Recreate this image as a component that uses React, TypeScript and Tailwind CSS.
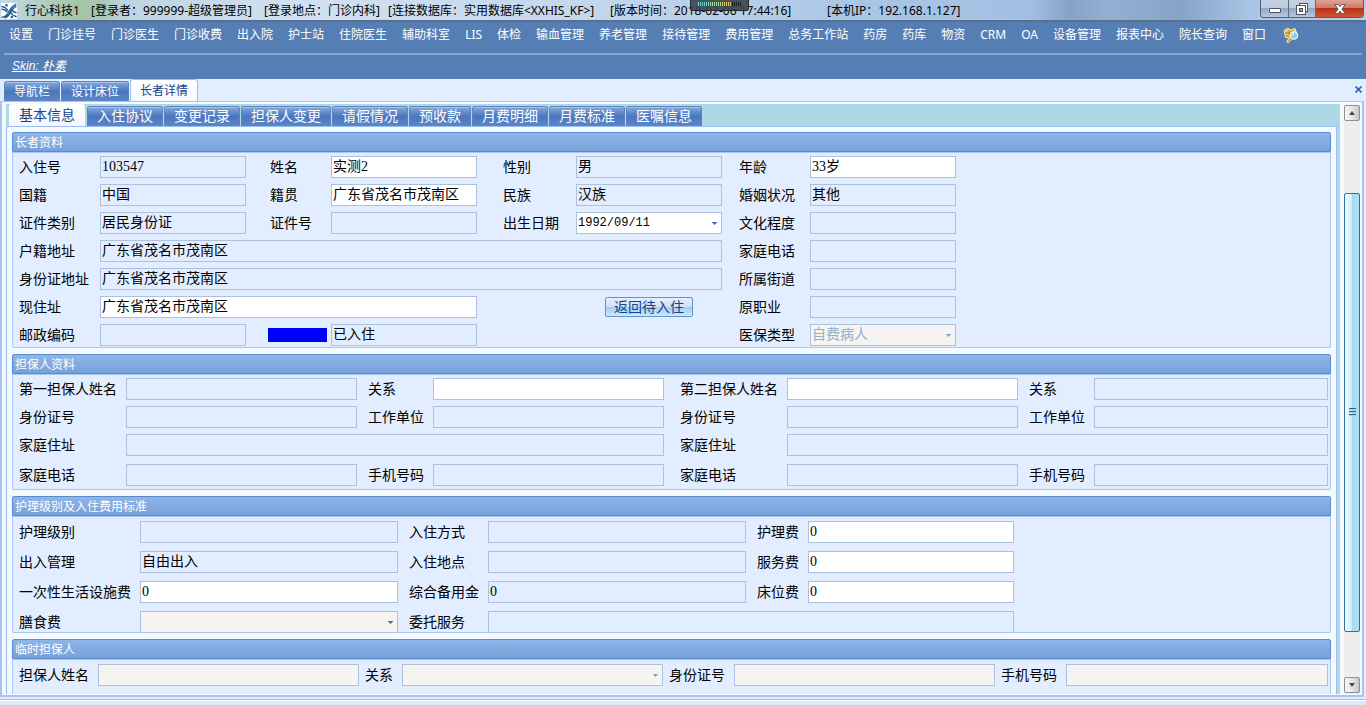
import { useId, type ReactNode } from 'react';

const menuItems = [
  '设置', '门诊挂号', '门诊医生', '门诊收费', '出入院', '护士站', '住院医生', '辅助科室', 'LIS', '体检',
  '输血管理', '养老管理', '接待管理', '费用管理', '总务工作站', '药房', '药库', '物资', 'CRM', 'OA',
  '设备管理', '报表中心', '院长查询', '窗口',
];

const sectionTabs = ['入住协议', '变更记录', '担保人变更', '请假情况', '预收款', '月费明细', '月费标准', '医嘱信息'];

const ui = "font-['Noto_Sans','Noto_Sans_CJK_SC',sans-serif]";
const song = "font-['Liberation_Serif','Noto_Sans_CJK_SC',serif]";
const idleTab =
  'border border-b-0 border-[#5c83bd] rounded-t-[3px] bg-linear-to-b from-[#86a9dc] via-[#4a76bd] to-[#5b87ca] text-white shadow-[inset_0_1px_0_#a5c3ec]';

type Tone = 'locked' | 'open' | 'off';
const tones: Record<Tone, string> = {
  locked: 'bg-[#e2eeff]',
  open: 'bg-white',
  off: 'bg-[#f5f4f1]',
};

function Arrow({ dim }: { dim?: boolean }) {
  return (
    <svg
      viewBox="0 0 5 3"
      className={`pointer-events-none absolute right-[5px] top-[10px] h-[3px] w-[5px] ${dim ? 'text-[#8aa9c9]' : 'text-[#3f74b5]'}`}
      shapeRendering="crispEdges"
      aria-hidden="true"
    >
      <path d="M0 0h5v1H4v1H3v1H2V2H1V1H0z" fill="currentColor" />
    </svg>
  );
}

interface FieldProps {
  label: string;
  value?: string;
  tone?: Tone;
  pad?: string;
  span?: string;
  mono?: boolean;
  drop?: 'select' | 'date';
  dim?: boolean;
}

function Field({ label, value = '', tone = 'locked', pad = '', span = '', mono, drop, dim }: FieldProps) {
  const id = useId();
  const latinOnly = /^[\d/]*$/.test(value);
  const box = `block h-[22px] w-full min-w-0 appearance-none rounded-none border border-[#abc1de] pl-px pr-0 leading-[18px] outline-none ${
    mono ? "font-['Liberation_Mono',monospace] text-xs" : 'text-sm'
  } ${latinOnly || drop ? 'pb-0' : 'pb-1'} ${tones[tone]} ${dim ? 'text-[#93aecb]' : 'text-black'}`;
  return (
    <>
      <label htmlFor={id} className={`h-[22px] whitespace-nowrap text-sm leading-6 text-black ${pad}`}>
        {label}
      </label>
      <div className={`relative ${span}`}>
        {drop === 'select' ? (
          <select id={id} disabled className={`${box} opacity-100`} defaultValue={value}>
            <option value={value}>{value}</option>
          </select>
        ) : (
          <input id={id} type="text" defaultValue={value} readOnly={tone === 'locked'} disabled={tone === 'off'} className={box} />
        )}
        {drop && <Arrow dim={dim} />}
      </div>
    </>
  );
}

function Group({ title, body, children }: { title: string; body: string; children: ReactNode }) {
  return (
    <section>
      <h2 className="h-5 rounded-t-[2px] border border-[#5b8bcb] bg-linear-to-b from-[#8fb5e8] to-[#76a1da] pl-[2px] text-xs leading-[20px] text-white">
        {title}
      </h2>
      <div className={`grid content-start rounded-b-[2px] bg-[#e2eeff] pl-[7px] pr-[3px] shadow-[inset_0_0_0_1px_#a9c8f1] ${body}`}>{children}</div>
    </section>
  );
}

function Logo() {
  return (
    <svg viewBox="0 0 16 16" className="h-4 w-4 shrink-0" aria-hidden="true">
      <rect width="16" height="16" fill="#fff" />
      <path
        d="M1 3.500c2 .3 4 1.300 5.600 3.600M1 6.300c2 .1 3.500 .9 4.800 2.500M1 14.200c2.800-.3 5-1.800 6.500-4.700C9 6.300 11 3.200 14.800 1.300M4 14.800c2.800-1 4.500-3 5.800-5.800 1.200-2.400 2.700-4.400 5-5.600M9.300 9c1.500 2.600 3.200 4 5.700 4.500M10.500 6.900c1.500 1.600 2.800 2.300 4.500 2.500"
        fill="none"
        stroke="#1c5d9b"
        strokeWidth="1.500"
        strokeLinecap="round"
      />
      <circle cx="5.500" cy="2.200" r="1.200" fill="#1c5d9b" />
      <circle cx="10.800" cy="14" r="1.200" fill="#1c5d9b" />
    </svg>
  );
}

function TitleBar() {
  return (
    <header
      className={`relative flex h-[22px] items-center whitespace-pre border-b-2 border-b-[#5b6e8c] bg-[linear-gradient(90deg,#c3d8e8_0,#b4cfc4_40px,#a3c4a6_80px,#a9c8b0_100px,#bdd4e2_125px,#d2e1f1_300px,#c8daee_500px,#bfd4ec_640px,#aac6e6_860px,#a3c0e2_1030px,#86a3c5_1070px,#94b1d3_1110px,#86a4c8_1180px,#a9c5e5_1250px,#b8d0ea_100%)] pl-px text-xs text-black ${ui}`}
    >
      <div className="flex flex-1 items-center pt-[2px]">
        <Logo />
        <h1 className="ml-2 w-[66px]">行心科技1</h1>
        <span className="w-[173px]">[登录者：999999-超级管理员]</span>
        <span className="w-[124px]">[登录地点：门诊内科]</span>
        <span className="w-[222px]">[连接数据库：实用数据库&lt;XXHIS_KF&gt;]</span>
        <span className="w-[217px]">[版本时间：2018-02-06 17:44:16]</span>
        <span>[本机IP：192.168.1.127]</span>
      </div>
      <div className="absolute left-[690px] top-0 flex h-[11px] w-[59px] items-start justify-center gap-px rounded-b-[3px] border border-t-0 border-[#23262d] bg-[#3d424d]/90 pt-[2px]">
        {Array.from({ length: 22 }, (_, i) => (
          <i key={i} className={`h-1 w-px ${i < 6 ? 'bg-[#63d5c8]' : i < 12 ? 'bg-[#a4dc9a]' : i < 17 ? 'bg-[#e3c95f]' : 'bg-[#1d2026]'}`} />
        ))}
      </div>
      <div className="mr-[2px] flex h-[18px] self-start overflow-hidden rounded-b-[4px] border border-t-0 border-[#4f5f74]">
        <button type="button" aria-label="最小化" className="flex w-[28px] items-center justify-center border-r border-[#5c6c82] bg-[linear-gradient(#c4d3e4_0,#bccbdd_50%,#93a9c3_50%,#b4c8de_100%)]">
          <svg viewBox="0 0 12 6" className="mt-1 h-[6px] w-3" aria-hidden="true">
            <rect x=".5" y=".5" width="11" height="4" rx=".5" fill="#fff" stroke="#4b5361" />
          </svg>
        </button>
        <button type="button" aria-label="还原" className="flex w-[27px] items-center justify-center border-r border-[#5c6c82] bg-[linear-gradient(#c4d3e4_0,#bccbdd_50%,#93a9c3_50%,#b4c8de_100%)]">
          <svg viewBox="0 0 12 12" className="h-3 w-3" aria-hidden="true">
            <rect x="3.500" y=".5" width="8" height="8" fill="#fff" stroke="#4b5361" />
            <rect x=".5" y="2.500" width="9" height="9" fill="#fff" stroke="#4b5361" />
            <rect x="3.500" y="5.500" width="3" height="3" fill="#8ea4bd" stroke="#4b5361" />
          </svg>
        </button>
        <button type="button" aria-label="关闭" className="flex w-[47px] items-center justify-center bg-[linear-gradient(#dda294_0,#cf7562_48%,#b53219_50%,#d0562f_100%)]">
          <svg viewBox="0 0 12 10" className="h-[10px] w-3" aria-hidden="true">
            <path d="M.8.6h3.400L6 2.700 7.800.6h3.400L7.900 5l3.300 4.400H7.800L6 7.300 4.200 9.400H.8L4.100 5z" fill="#fff" stroke="#4b5361" strokeWidth=".9" />
          </svg>
        </button>
      </div>
    </header>
  );
}

function MenuBar() {
  return (
    <div className="bg-[#557eb4] px-1 text-white">
      <nav className={`flex h-[33px] items-center gap-[15px] overflow-hidden whitespace-nowrap border-b-2 border-[#86a5d2] pb-[5px] pl-[5px] text-xs ${ui}`}>
        {menuItems.map((m) => (
          <a key={m} href="#">
            {m}
          </a>
        ))}
        <a href="#" aria-label="查询工具" className="ml-[2px]">
          <svg viewBox="0 0 16 16" className="h-4 w-4" aria-hidden="true">
            <path d="M1 3.500 5 1l2.500 2L12 1.500l1.500 4L12 10l-5 1.500-4.500-1.200z" fill="#f1cb4e" stroke="#fff3c0" strokeWidth=".8" />
            <path d="M2 6h4M6 3.500l1 5M9.500 3.500 8 6.500M3 8.500l3 1" stroke="#a87412" strokeWidth="1" fill="none" />
            <circle cx="11" cy="8.500" r="3.600" fill="#7fd0ea" stroke="#eef9ff" strokeWidth="1.200" />
            <path d="M9.200 8.500a1.800 1.800 0 0 1 1.800-1.800" stroke="#fff" fill="none" />
            <path d="M7.800 11.500 5 14.300" stroke="#fff3c0" strokeWidth="3" strokeLinecap="round" />
            <path d="M7.800 11.500 5.200 14.100" stroke="#e2a91e" strokeWidth="1.800" strokeLinecap="round" />
          </svg>
        </a>
      </nav>
      <div className="h-6 pl-2 text-xs leading-[22px]">
        <a href="#" className="font-['Liberation_Sans','Noto_Sans_CJK_SC',sans-serif] italic underline">
          Skin: 朴素
        </a>
      </div>
    </div>
  );
}

function ScrollBar() {
  const end = 'flex h-4 w-4 shrink-0 items-center justify-center rounded-[2px] border border-[#8f8f8f] bg-linear-to-r from-[#f7f7f7] via-[#e6e6e6] to-[#c6c6c8]';
  return (
    <div className="ml-1 mr-[2px] mt-px flex w-4 shrink-0 flex-col bg-[#eeeeee] pb-px">
      <button type="button" aria-label="向上滚动" className={end}>
        <svg viewBox="0 0 6 4" className="h-1 w-[6px]" aria-hidden="true">
          <path d="M3 0l3 4H0z" fill="#4a4a4a" />
        </svg>
      </button>
      <div className="grow-[73]" />
      <div className="flex grow-[437] flex-col items-center justify-center gap-px rounded-[2px] border border-[#2f7199] bg-[linear-gradient(90deg,#f0faff_0,#d8f1fc_45%,#a5daf3_50%,#b4e1f6_100%)]">
        <i className="h-[2px] w-[7px] border-b border-[#9fd0e6] bg-[#2a6a8c]" />
        <i className="h-[2px] w-[7px] border-b border-[#9fd0e6] bg-[#2a6a8c]" />
        <i className="h-[2px] w-[7px] border-b border-[#9fd0e6] bg-[#2a6a8c]" />
      </div>
      <div className="grow-[46]" />
      <button type="button" aria-label="向下滚动" className={end}>
        <svg viewBox="0 0 6 4" className="h-1 w-[6px]" aria-hidden="true">
          <path d="M3 4l3-4H0z" fill="#4a4a4a" />
        </svg>
      </button>
    </div>
  );
}

function Forms() {
  return (
    <form className="flex flex-col gap-[6px]" onSubmit={(e) => e.preventDefault()}>
      <Group title="长者资料" body="grid-cols-[81px_146px_85px_146px_99px_146px_88px_146px] gap-y-[6px] pt-1 pb-[2px]">
        <Field label="入住号" value="103547" />
        <Field label="姓名" value="实测2" tone="open" pad="pl-6" />
        <Field label="性别" value="男" pad="pl-[26px]" />
        <Field label="年龄" value="33岁" tone="open" pad="pl-[17px]" />

        <Field label="国籍" value="中国" />
        <Field label="籍贯" value="广东省茂名市茂南区" tone="open" pad="pl-6" />
        <Field label="民族" value="汉族" pad="pl-[26px]" />
        <Field label="婚姻状况" value="其他" pad="pl-[17px]" />

        <Field label="证件类别" value="居民身份证" />
        <Field label="证件号" pad="pl-6" />
        <Field label="出生日期" value="1992/09/11" tone="open" pad="pl-[26px]" drop="date" mono />
        <Field label="文化程度" pad="pl-[17px]" />

        <Field label="户籍地址" value="广东省茂名市茂南区" span="col-span-5" />
        <Field label="家庭电话" pad="pl-[17px]" />

        <Field label="身份证地址" value="广东省茂名市茂南区" span="col-span-5" />
        <Field label="所属街道" pad="pl-[17px]" />

        <Field label="现住址" value="广东省茂名市茂南区" tone="open" span="col-span-3" />
        <div className="col-span-2 flex items-center justify-end pr-[29px]">
          <button
            type="button"
            className="h-5 rounded-[2px] border border-[#5f93d6] bg-[linear-gradient(#e4effc_0,#cfe2f6_48%,#a3cdf3_52%,#c8ecfb_100%)] px-2 text-sm leading-[20px] text-[#15428b]"
          >
            返回待入住
          </button>
        </div>
        <Field label="原职业" pad="pl-[17px]" />

        <Field label="邮政编码" />
        <span className="ml-[22px] mr-1 h-[14px] self-center bg-[#0000ff]" />
        <input aria-label="入住状态" defaultValue="已入住" readOnly className="h-[22px] w-full border border-[#abc1de] bg-[#e2eeff] pb-1 pl-px text-sm leading-[18px] outline-none" />
        <span className="col-span-2" />
        <Field label="医保类型" value="自费病人" tone="off" pad="pl-[17px]" drop="select" dim />
      </Group>

      <Group title="担保人资料" body="grid-cols-[107px_231fr_76px_231fr_123px_231fr_76px_234fr] gap-y-[6px] pt-1 pb-1">
        <Field label="第一担保人姓名" />
        <Field label="关系" tone="open" pad="pl-[11px]" />
        <Field label="第二担保人姓名" tone="open" pad="pl-4" />
        <Field label="关系" pad="pl-[11px]" />

        <Field label="身份证号" />
        <Field label="工作单位" pad="pl-[11px]" />
        <Field label="身份证号" pad="pl-4" />
        <Field label="工作单位" pad="pl-[11px]" />

        <Field label="家庭住址" span="col-span-3" />
        <Field label="家庭住址" pad="pl-4" span="col-span-3" />

        <div className="col-span-8 mt-[2px] grid grid-cols-subgrid">
          <Field label="家庭电话" />
          <Field label="手机号码" pad="pl-[11px]" />
          <Field label="家庭电话" pad="pl-4" />
          <Field label="手机号码" pad="pl-[11px]" />
        </div>
      </Group>

      <Group title="护理级别及入住费用标准" body="grid-cols-[121px_258px_90px_258px_62px_206px] gap-y-2 pt-[5px]">
        <Field label="护理级别" />
        <Field label="入住方式" pad="pl-[11px]" />
        <Field label="护理费" value="0" tone="open" pad="pl-[11px]" />

        <Field label="出入管理" value="自由出入" />
        <Field label="入住地点" pad="pl-[11px]" />
        <Field label="服务费" value="0" tone="open" pad="pl-[11px]" />

        <Field label="一次性生活设施费" value="0" tone="open" />
        <Field label="综合备用金" value="0" pad="pl-[11px]" />
        <Field label="床位费" value="0" tone="open" pad="pl-[11px]" />

        <Field label="膳食费" tone="off" drop="select" />
        <Field label="委托服务" pad="pl-[11px]" span="col-span-3" />
      </Group>

      <Group title="临时担保人" body="grid-cols-[79px_261fr_43px_261fr_71px_261fr_71px_262fr] pt-[5px] pb-4">
        <Field label="担保人姓名" tone="off" />
        <Field label="关系" tone="off" pad="pl-[6px]" drop="select" dim />
        <Field label="身份证号" tone="off" pad="pl-[6px]" />
        <Field label="手机号码" tone="off" pad="pl-[6px]" />
      </Group>
    </form>
  );
}

export default function App() {
  return (
    <div className={`flex h-screen flex-col overflow-hidden bg-[#e2eeff] ${song}`}>
      <TitleBar />
      <MenuBar />

      <div className="flex h-[22px] shrink-0 items-end pl-1 text-xs" role="tablist">
        <button type="button" role="tab" className={`mr-px h-5 px-[9px] pt-px ${idleTab}`}>导航栏</button>
        <button type="button" role="tab" className={`mr-px h-5 px-[9px] pt-px ${idleTab}`}>设计床位</button>
        <button type="button" role="tab" aria-selected="true" className="h-[22px] rounded-t-[3px] border border-b-0 border-[#9dbdec] bg-linear-to-b from-white to-[#f4f8ff] px-[9px] pt-px text-[#15428b]">
          长者详情
        </button>
        <button type="button" aria-label="关闭标签页" className="mb-2 ml-auto mr-1">
          <svg viewBox="0 0 7 7" className="h-[7px] w-[7px]" aria-hidden="true">
            <path d="M.5.5l6 6M6.500.5l-6 6" stroke="#2f64b0" strokeWidth="1.700" />
          </svg>
        </button>
      </div>

      <main className="mr-[2px] flex min-h-0 flex-1 border-2 border-t border-[#a5c4f0] bg-[#f4f8ff] pb-px pl-1 pt-[2px]">
        <div className="flex min-w-0 flex-1 flex-col bg-[#add8e6] pr-[3px]">
          <div className="flex h-[22px] shrink-0 items-end gap-px pl-[3px] text-sm" role="tablist">
            <button type="button" role="tab" aria-selected="true" className="mr-px h-[22px] rounded-t-[3px] bg-linear-to-b from-white to-[#f4f8ff] px-[10px] leading-6 text-[#15428b]">
              基本信息
            </button>
            {sectionTabs.map((t) => (
              <button key={t} type="button" role="tab" className={`h-5 px-[9px] leading-[20px] ${idleTab}`}>
                {t}
              </button>
            ))}
          </div>
          <div className="min-h-0 flex-1 overflow-hidden border border-b-0 border-[#9dbdec] bg-[#f4f8ff] px-[5px] pt-[5px]">
            <Forms />
          </div>
        </div>
        <ScrollBar />
      </main>

      <footer className="mt-[2px] h-[6px] shrink-0 border-t border-[#9dbdec] bg-[#dce9fb] shadow-[inset_0_1px_0_#fff]" />
    </div>
  );
}
